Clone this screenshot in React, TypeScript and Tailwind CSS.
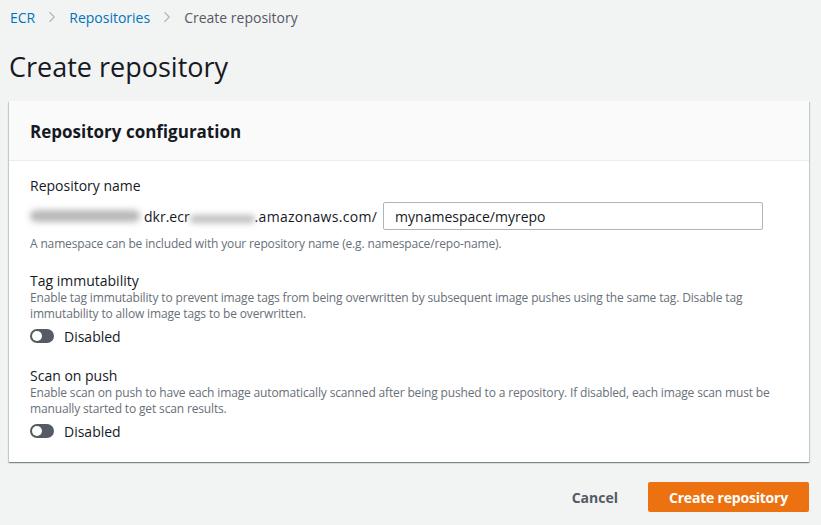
import { ChevronRight } from 'lucide-react'

const font = { fontFamily: '"Open Sans", "Noto Sans", Arial, sans-serif' }

function Toggle() {
  return (
    <div className="flex items-center gap-[10px] h-[20px]">
      <div className="w-[24px] h-[14px] rounded-full bg-[#545b64] flex items-center pl-[2px]">
        <div className="w-[10px] h-[10px] rounded-full bg-white" />
      </div>
      <span className="text-[14px] text-[#16191f]">Disabled</span>
    </div>
  )
}

function Field({ label, desc }: { label: string; desc: string }) {
  return (
    <div>
      <div className="text-[14px] leading-[18px] text-[#16191f]">{label}</div>
      <div className="text-[12px] leading-[16px] text-[#687078] tracking-[-0.15px]">{desc}</div>
      <div className="mt-[4px]">
        <Toggle />
      </div>
    </div>
  )
}

export default function App() {
  return (
    <div className="w-[821px] h-[525px] bg-[#f2f3f3] overflow-hidden" style={font}>
      <div className="flex items-center text-[14px] pl-[10px] pt-[7px] h-[20px] box-content">
        <span className="text-[#0073bb]">ECR</span>
        <ChevronRight size={18} strokeWidth={1.5} className="text-[#aab7b8] mx-[8px]" />
        <span className="text-[#0073bb]">Repositories</span>
        <ChevronRight size={18} strokeWidth={1.5} className="text-[#aab7b8] mx-[8px]" />
        <span className="text-[#545b64]">Create repository</span>
      </div>
      <h1 className="text-[27px] leading-[36px] text-[#16191f] pl-[9px] mt-[22px]">Create repository</h1>
      <div className="mx-[9px] w-[800px] mt-[16px] bg-white shadow-[0_1px_1px_0_rgba(0,28,36,0.3),1px_1px_1px_0_rgba(0,28,36,0.15),-1px_1px_1px_0_rgba(0,28,36,0.15)]">
        <div className="h-[60px] bg-[#fafafa] border-b border-[#eaeded] flex items-center px-[21px] pt-[2px]">
          <h2 className="text-[17px] font-bold text-[#16191f]">Repository configuration</h2>
        </div>
        <div className="px-[21px] pt-[15px] pb-[21px]">
          <div className="text-[14px] leading-[20px] text-[#16191f]">Repository name</div>
          <div className="flex items-center mt-[6px] h-[28px]">
            <span className="text-[14px] text-[#16191f] flex items-center">
              <span className="inline-block w-[110px] h-[12px] rounded-full bg-[#b8b8b8] blur-[3px]" />
              <span className="ml-[4px]">dkr.ecr</span>
              <span className="inline-block w-[65px] h-[8px] mt-[6px] rounded-full bg-[#bdbdbd] blur-[3px]" />
              <span className="tracking-[0.3px]">.amazonaws.com/</span>
            </span>
            <div className="ml-[6px] w-[380px] h-[28px] border border-[#aab7b8] rounded-[2px] flex items-center px-[11px] text-[14px] text-[#16191f]">
              mynamespace/myrepo
            </div>
          </div>
          <div className="text-[12px] text-[#687078] mt-[6px] leading-[16px] tracking-[-0.15px]">
            A namespace can be included with your repository name (e.g. namespace/repo-name).
          </div>
          <div className="mt-[20px]">
            <Field
              label="Tag immutability"
              desc="Enable tag immutability to prevent image tags from being overwritten by subsequent image pushes using the same tag. Disable tag immutability to allow image tags to be overwritten."
            />
          </div>
          <div className="mt-[21px]">
            <Field
              label="Scan on push"
              desc="Enable scan on push to have each image automatically scanned after being pushed to a repository. If disabled, each image scan must be manually started to get scan results."
            />
          </div>
        </div>
      </div>
      <div className="flex justify-end items-center mt-[20px] mr-[12px] gap-[10px]">
        <button className="text-[14px] font-bold text-[#545b64] px-[20px] h-[30px] whitespace-nowrap">Cancel</button>
        <button className="text-[14px] font-bold text-white bg-[#ec7211] rounded-[2px] h-[30px] w-[161px] whitespace-nowrap tracking-[-0.2px]">Create repository</button>
      </div>
    </div>
  )
}
